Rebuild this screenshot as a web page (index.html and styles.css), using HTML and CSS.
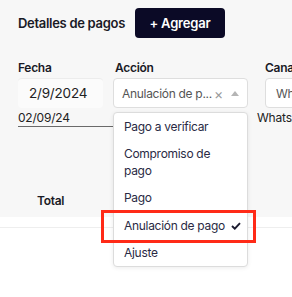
FILE: index.html
```html
<!DOCTYPE html>
<html lang="es">
<head>
    <meta charset="UTF-8">
    <meta name="viewport" content="width=device-width, initial-scale=1.0">
    <title>Detalles de pagos</title>
    <link rel="stylesheet" href="styles.css">
</head>
<body>

<div class="page">
    <section class="panel">
        <div class="panel-head">
            <h2>Detalles de pagos</h2>
            <button class="add-btn">+ Agregar</button>
        </div>

        <div class="grid">
            <div class="label">Fecha</div>
            <div class="label label-action">Acción</div>
            <div class="label">Canal</div>

            <div class="date-input">2/9/2024</div>
            <div class="select">
                <span class="select-value">Anulación de p...</span>
                <span class="clear">&times;</span>
                <span class="caret"></span>
            </div>
            <div class="select select-canal">
                <span class="select-value">WhatsApp</span>
            </div>

            <div class="cell cell-date">02/09/24</div>
            <div class="cell"></div>
            <div class="cell cell-canal">WhatsApp</div>
        </div>

        <div class="total-row">Total</div>
    </section>
    <div class="footer-line"></div>

    <ul class="dropdown">
        <li>Pago a verificar</li>
        <li>Compromiso de<br>pago</li>
        <li>Pago</li>
        <li class="selected">Anulación de pago
            <svg width="10" height="8" viewBox="0 0 10 8"><path d="M1 4 L3.8 6.7 L9 1.2" fill="none" stroke="#1c1c30" stroke-width="1.9"/></svg>
        </li>
        <li>Ajuste</li>
    </ul>

    <div class="highlight"></div>
</div>

</body>
</html>
```

FILE: styles.css
```css
/* base */
body {
    margin: 0;
    padding: 0;
    background-color: #ffffff;
    font-family: Inter, "Noto Sans", sans-serif;
    color: #222;
}
.page {
    position: relative;
    width: 292px;
    height: 297px;
    overflow: hidden;
}
.panel {
    background-color: #f7f7f7;
    padding: 8px 0 8px 18px;
}
.panel-head {
    display: flex;
    align-items: center;
    gap: 10px;
    height: 30px;
}
.panel-head h2 {
    margin: 0;
    font-size: 13px;
    font-weight: 600;
    color: #1a1a26;
    letter-spacing: -0.3px;
}
.add-btn {
    width: 90px;
    height: 30px;
    background-color: #0b0a26;
    color: white;
    border: none;
    border-radius: 4px;
    font-family: inherit;
    font-size: 13px;
    font-weight: 600;
    letter-spacing: -0.2px;
    padding: 0;
}

/* table */
.grid {
    display: grid;
    grid-template-columns: 95px 152px 100px;
    margin-top: 22px;
}
.label {
    font-size: 12px;
    font-weight: 600;
    line-height: 16px;
    letter-spacing: -0.3px;
    color: #1a1a26;
    margin-bottom: 2px;
}
.label-action {
    padding-left: 2px;
}
.date-input {
    width: 74px;
    height: 29px;
    padding-left: 11px;
    background-color: #fbfbfb;
    border-top: 1px solid #ececec;
    border-radius: 4px;
    font-size: 13.5px;
    letter-spacing: -0.2px;
    line-height: 29px;
    color: #222;
}
.select {
    box-sizing: border-box;
    width: 135px;
    height: 30px;
    background-color: white;
    border: 1px solid #dedede;
    border-radius: 4px;
    display: flex;
    align-items: center;
    padding-left: 8px;
    font-size: 12px;
    letter-spacing: -0.3px;
    color: #555;
}
.select-value {
    white-space: nowrap;
}
.select-canal {
    width: 80px;
    padding-left: 10px;
    overflow: hidden;
}
.clear {
    margin-left: 2px;
    font-size: 14px;
    color: #999;
}
.caret {
    margin-left: 8px;
    width: 0;
    height: 0;
    border-left: 4px solid transparent;
    border-right: 4px solid transparent;
    border-bottom: 5px solid #b5b5b5;
}
.cell {
    height: 16px;
    padding-top: 2px;
    font-size: 12px;
    letter-spacing: -0.2px;
    line-height: 16px;
    color: #222;
    white-space: nowrap;
}
.cell-date {
    border-bottom: 1px solid #6a6a6a;
}
.cell-canal {
    margin-left: -8px;
}
.total-row {
    margin-top: 66px;
    padding-left: 19px;
    font-size: 12px;
    font-weight: 600;
    letter-spacing: -0.3px;
    line-height: 16px;
    color: #1a1a26;
}
.footer-line {
    margin-top: 10px;
    height: 1px;
    background-color: #eeeeee;
}

/* open menu */
.dropdown {
    position: absolute;
    left: 113px;
    top: 112px;
    width: 133px;
    margin: 0;
    padding: 0;
    list-style: none;
    background-color: white;
    border: 1px solid #dcdcdc;
    border-radius: 4px;
    box-shadow: 0 1px 4px rgba(0, 0, 0, 0.08);
}
.dropdown li {
    padding: 5px 10px;
    font-size: 12px;
    letter-spacing: -0.3px;
    line-height: 17px;
    color: #2a2a44;
    white-space: nowrap;
}
.dropdown li.selected {
    padding-top: 6px;
    padding-bottom: 5px;
}
.dropdown li svg {
    margin-left: 3px;
}
.highlight {
    position: absolute;
    left: 101px;
    top: 210px;
    width: 149px;
    height: 27px;
    border: 3px solid #ff2a17;
}
```
